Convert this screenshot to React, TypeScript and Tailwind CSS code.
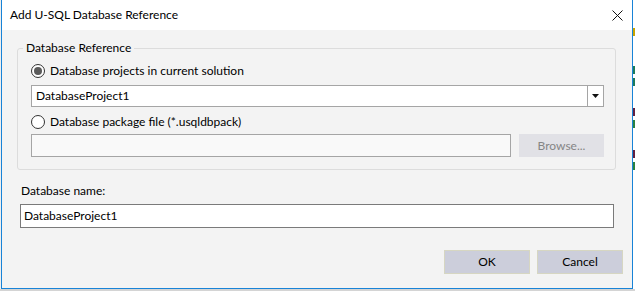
import React from 'react';

const font = { fontFamily: 'Lato, "Noto Sans", Arial, sans-serif' };

const Radio: React.FC<{ checked?: boolean; label: string }> = ({ checked, label }) => (
  <label className="flex items-center h-[16px] text-[12px] leading-[16px] text-black">
    <span className="w-[14px] h-[14px] rounded-full border border-[#333333] bg-white flex items-center justify-center shrink-0">
      {checked && <span className="w-[8px] h-[8px] rounded-full bg-[#5a5a5a]" />}
    </span>
    <span className="ml-[5px]">{label}</span>
  </label>
);

export default function App() {
  return (
    <div className="w-[635px] h-[291px] bg-white flex flex-col overflow-hidden" style={font}>
      <div className="flex h-[289px]">
        <div className="w-[1px] bg-[#eeeeee]" />
        <div className="w-[632px] flex flex-col border-x border-b border-[#1883d7] bg-[#f3f3f3]">
          {/* title bar */}
          <div className="h-[30px] bg-white flex items-center justify-between pl-[8px] pr-[8px] shrink-0">
            <span className="text-[12px] text-black">Add U-SQL Database Reference</span>
            <svg width="11" height="11" viewBox="0 0 11 11" className="mr-[1px]">
              <path d="M0.5 0.5 L10.5 10.5 M10.5 0.5 L0.5 10.5" stroke="#111" strokeWidth="1" />
            </svg>
          </div>

          {/* group box */}
          <div className="relative mt-[18px] ml-[15px] mr-[16px] border border-[#dcdcdc] rounded-[3px] pt-[14px] pl-[13px] pr-[11px] pb-[12px] flex flex-col">
            <span className="absolute -top-[9px] left-[5px] px-[3px] bg-[#f3f3f3] text-[12px] leading-[16px] text-black">
              Database Reference
            </span>
            <Radio checked label="Database projects in current solution" />
            <div className="mt-[6px] h-[22px] flex border border-[#a5a5a5] bg-white">
              <span className="flex-1 pl-[4px] text-[12px] leading-[20px] text-black">DatabaseProject1</span>
              <div className="w-[16px] border-l border-[#a5a5a5] flex items-center justify-center">
                <svg width="7" height="4" viewBox="0 0 7 4">
                  <path d="M0 0 L7 0 L3.5 4 Z" fill="#111" />
                </svg>
              </div>
            </div>
            <div className="mt-[7px]">
              <Radio label="Database package file (*.usqldbpack)" />
            </div>
            <div className="mt-[4px] flex gap-[8px] h-[23px]">
              <div className="flex-1 border border-[#a5a5a5] bg-[#f9f9f9]" />
              <div className="w-[85px] bg-[#e1e1e6] flex items-center justify-center text-[12px] text-[#858585]">
                Browse...
              </div>
            </div>
          </div>

          {/* database name */}
          <div className="mt-[13px] ml-[19px] text-[12px] leading-[16px] text-black">Database name:</div>
          <div className="mt-[5px] ml-[18px] mr-[18px] h-[24px] border border-[#7a7a7a] bg-white flex items-center pl-[3px] text-[12px] text-black">
            DatabaseProject1
          </div>

          {/* buttons */}
          <div className="mt-[22px] flex justify-end gap-[7px] mr-[9px]">
            <div className="w-[86px] h-[24px] border border-[#d6d6c2] bg-[#cccedb] flex items-center justify-center text-[12px] text-black">
              OK
            </div>
            <div className="w-[86px] h-[24px] border border-[#d6d6c2] bg-[#cccedb] flex items-center justify-center text-[12px] text-black">
              Cancel
            </div>
          </div>
        </div>
        <div className="w-[2px] flex flex-col bg-white">
          <div className="h-[28px]" />
          <div className="h-[8px] bg-[#c8a400]" />
          <div className="h-[30px]" />
          <div className="h-[8px] bg-[#1e7a5a]" />
          <div className="h-[4px]" />
          <div className="h-[8px] bg-[#1e7a5a]" />
          <div className="h-[22px]" />
          <div className="h-[8px] bg-[#602040]" />
          <div className="h-[4px]" />
          <div className="h-[8px] bg-[#2a8040]" />
          <div className="h-[22px]" />
          <div className="h-[8px] bg-[#602040]" />
          <div className="h-[4px]" />
          <div className="h-[8px] bg-[#2a8040]" />
        </div>
      </div>
      <div className="h-[2px] bg-[#d4d4d4]" />
    </div>
  );
}
